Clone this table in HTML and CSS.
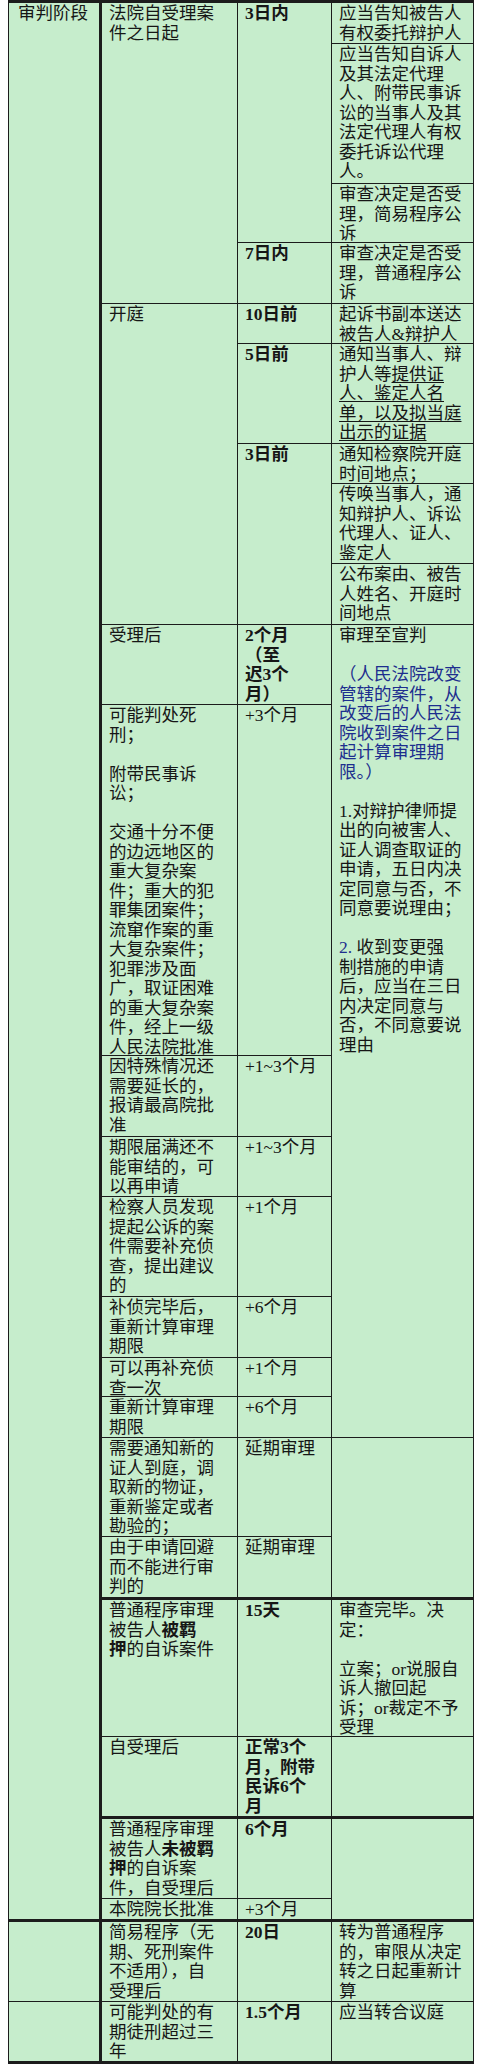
FILE: index.html
```html
<!DOCTYPE html>
<html lang="zh-CN">
<head>
<meta charset="utf-8">
<title>审判阶段期限</title>
<link rel="stylesheet" href="styles.css">
</head>
<body>
<div class="sheet">
  <!-- r1 -->
  <div class="c c1 rs23 tb">审判阶段</div>
  <div class="c rs4">法院自受理案<br>件之日起</div>
  <div class="c rs3 b">3日内</div>
  <div class="c">应当告知被告人<br>有权委托辩护人</div>
  <!-- r2 -->
  <div class="c">应当告知自诉人<br>及其法定代理<br>人、附带民事诉<br>讼的当事人及其<br>法定代理人有权<br>委托诉讼代理<br>人。</div>
  <!-- r3 -->
  <div class="c">审查决定是否受<br>理，简易程序公<br>诉</div>
  <!-- r4 -->
  <div class="c b">7日内</div>
  <div class="c">审查决定是否受<br>理，普通程序公<br>诉</div>
  <!-- r5 -->
  <div class="c rs5">开庭</div>
  <div class="c b">10日前</div>
  <div class="c">起诉书副本送达<br>被告人&amp;辩护人</div>
  <!-- r6 -->
  <div class="c b">5日前</div>
  <div class="c">通知当事人、辩<br>护人等<u>提供证<br>人、鉴定人名<br>单，以及拟当庭<br>出示的证据</u></div>
  <!-- r7 -->
  <div class="c rs3 b">3日前</div>
  <div class="c">通知检察院开庭<br>时间地点；</div>
  <!-- r8 -->
  <div class="c">传唤当事人，通<br>知辩护人、诉讼<br>代理人、证人、<br>鉴定人</div>
  <!-- r9 -->
  <div class="c">公布案由、被告<br>人姓名、开庭时<br>间地点</div>
  <!-- r10 -->
  <div class="c">受理后</div>
  <div class="c b">2个月<br>（至<br>迟3个<br>月）</div>
  <div class="c rs8">审理至宣判<br><br><span class="blue">（人民法院改变<br>管辖的案件，从<br>改变后的人民法<br>院收到案件之日<br>起计算审理期<br>限。）</span><br><br>1.对辩护律师提<br>出的向被害人、<br>证人调查取证的<br>申请，五日内决<br>定同意与否，不<br>同意要说理由；<br><br><span class="blue">2.</span> 收到变更强<br>制措施的申请<br>后，应当在三日<br>内决定同意与<br>否，不同意要说<br>理由</div>
  <!-- r11 -->
  <div class="c">可能判处死<br>刑；<br><br>附带民事诉<br>讼；<br><br>交通十分不便<br>的边远地区的<br>重大复杂案<br>件；重大的犯<br>罪集团案件；<br>流窜作案的重<br>大复杂案件；<br>犯罪涉及面<br>广，取证困难<br>的重大复杂案<br>件，经上一级<br>人民法院批准</div>
  <div class="c">+3个月</div>
  <!-- r12 -->
  <div class="c">因特殊情况还<br>需要延长的，<br>报请最高院批<br>准</div>
  <div class="c">+1~3个月</div>
  <!-- r13 -->
  <div class="c">期限届满还不<br>能审结的，可<br>以再申请</div>
  <div class="c">+1~3个月</div>
  <!-- r14 -->
  <div class="c">检察人员发现<br>提起公诉的案<br>件需要补充侦<br>查，提出建议<br>的</div>
  <div class="c">+1个月</div>
  <!-- r15 -->
  <div class="c">补侦完毕后，<br>重新计算审理<br>期限</div>
  <div class="c">+6个月</div>
  <!-- r16 -->
  <div class="c">可以再补充侦<br>查一次</div>
  <div class="c">+1个月</div>
  <!-- r17 -->
  <div class="c">重新计算审理<br>期限</div>
  <div class="c">+6个月</div>
  <!-- r18 -->
  <div class="c">需要通知新的<br>证人到庭，调<br>取新的物证，<br>重新鉴定或者<br>勘验的；</div>
  <div class="c">延期审理</div>
  <div class="c rs2 tb"></div>
  <!-- r19 -->
  <div class="c tb">由于申请回避<br>而不能进行审<br>判的</div>
  <div class="c tb">延期审理</div>
  <!-- r20 -->
  <div class="c">普通程序审理<br>被告人<b>被羁<br>押</b>的自诉案件</div>
  <div class="c b">15天</div>
  <div class="c">审查完毕。决<br>定：<br><br>立案；or说服自<br>诉人撤回起<br>诉；or裁定不予<br>受理</div>
  <!-- r21 -->
  <div class="c tb">自受理后</div>
  <div class="c b tb">正常3个<br>月，附带<br>民诉6个<br>月</div>
  <div class="c tb"></div>
  <!-- r22 -->
  <div class="c">普通程序审理<br>被告人<b>未被羁<br>押</b>的自诉案<br>件，自受理后</div>
  <div class="c b">6个月</div>
  <div class="c rs2 tb"></div>
  <!-- r23 -->
  <div class="c tb">本院院长批准</div>
  <div class="c tb">+3个月</div>
  <!-- r24 -->
  <div class="c c1"></div>
  <div class="c">简易程序（无<br>期、死刑案件<br>不适用），自<br>受理后</div>
  <div class="c b">20日</div>
  <div class="c">转为普通程序<br>的，审限从决定<br>转之日起重新计<br>算</div>
  <!-- r25 -->
  <div class="c c1 tb"></div>
  <div class="c tb">可能判处的有<br>期徒刑超过三<br>年</div>
  <div class="c b tb">1.5个月</div>
  <div class="c tb">应当转合议庭</div>
</div>
</body>
</html>
```

FILE: styles.css
```css
html, body {
  margin: 0;
  padding: 0;
  background: #ffffff;
}

body {
  padding: 0 8px;
}

.sheet {
  display: grid;
  grid-template-columns: 93px 136px 94px 142px;
  grid-template-rows: 41px 140px 59px 61px 40px 100px 40px 80px 61px 80px 351px 81px 60px 100px 61px 39px 41px 99px 63px 137px 82px 80px 23px 80px 62px;
  grid-auto-flow: row;
  width: 466px;
  box-sizing: border-box;
  border-top: 3px solid #1c1c1c;
  border-left: 1px solid #1c1c1c;
  background: #c6edcc;
  font-family: "Liberation Serif", "Noto Sans CJK SC", serif;
  font-size: 17.5px;
  line-height: 19.5px;
  color: #161616;
}

.c {
  box-sizing: border-box;
  background: #c6edcc;
  border-right: 1px solid #1c1c1c;
  border-bottom: 1px solid #1c1c1c;
  padding: 1px 0 0 7px;
  white-space: nowrap;
  overflow: visible;
}

.c1 {
  grid-column: 1;
  border-right-width: 3px;
  padding-left: 9px;
}

.tb {
  border-bottom-width: 3px;
}

.b {
  font-weight: bold;
}

.blue {
  color: #1d2e8e;
}

u {
  text-decoration-thickness: 1px;
  text-underline-offset: 2px;
}

.rs2 { grid-row: span 2; }
.rs3 { grid-row: span 3; }
.rs4 { grid-row: span 4; }
.rs5 { grid-row: span 5; }
.rs8 { grid-row: span 8; }
.rs23 { grid-row: span 23; }
```
